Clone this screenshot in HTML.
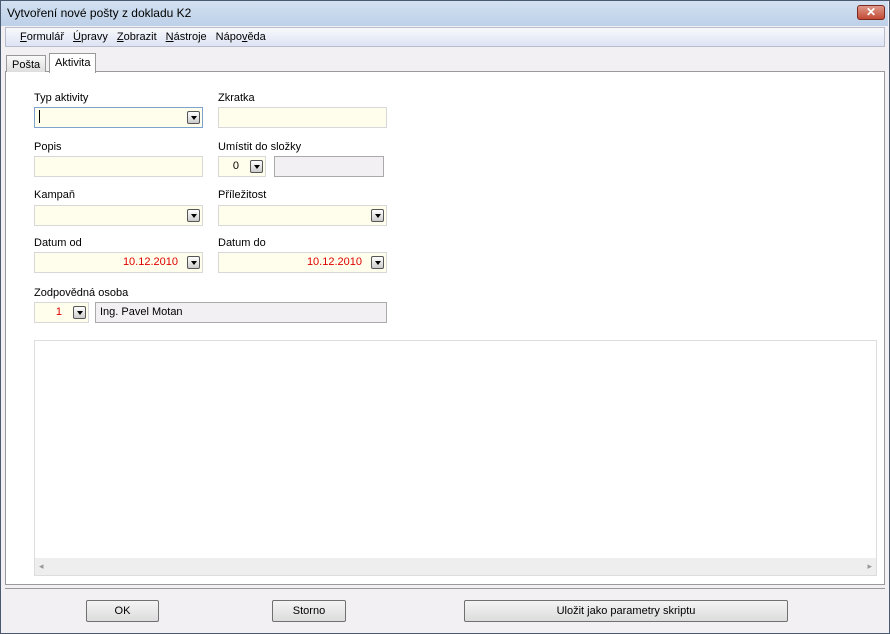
<!DOCTYPE html><html><head><style>
*{box-sizing:border-box}body{margin:0;width:890px;height:634px;overflow:hidden;font-family:"Liberation Sans",sans-serif;font-size:11px;color:#000;position:relative;background:#f2f0f2}
.a{position:absolute}
.win{left:0;top:0;width:890px;height:634px;border:1px solid #4a5a70;background:#f2f0f2}
.title{left:1px;top:1px;width:887px;height:25px;background:linear-gradient(#d3e1f1,#bdd0e8);font-size:12px;padding:5px 6px}
.close{left:857px;top:5px;width:28px;height:15px;background:linear-gradient(#e1998a,#c24a34);border:1px solid #7a2a20;border-radius:3px;color:#fff;font-weight:bold;text-align:center;font-size:12px;line-height:13px}
.menu{left:5px;top:27px;width:880px;height:20px;background:linear-gradient(#f8f9fd,#dde3f3);border:1px solid #b8bccc;padding:3px 0 0 14px}
.menu span{margin-right:9px}
.tab{top:53px;height:19px;padding:3px 5px;border:1px solid #999;border-bottom:none}
.panel{left:5px;top:71px;width:880px;height:514px;background:#fff;border:1px solid #9a9a9a}
.inp{background:#fffeec;border:1px solid #d8d8d8;height:21px}
.dd{width:13px;height:13px;border:1px solid #555;border-radius:2px;background:linear-gradient(#fff,#ccc)}
.dd:after{content:"";position:absolute;left:3px;top:4px;border:3px solid transparent;border-top:4px solid #000}
.red{color:#e00000;text-align:right}
.btn{top:600px;height:22px;border:1px solid #707070;border-radius:2px;background:linear-gradient(#f4f4f4,#dcdcdc);text-align:center;line-height:20px;font-size:11px}
</style></head><body>
<div class="a win"></div>
<div class="a title">Vytvoření nové pošty z dokladu K2</div>
<div class="a close">✕</div>
<div class="a menu"><span><u>F</u>ormulář</span><span><u>Ú</u>pravy</span><span><u>Z</u>obrazit</span><span><u>N</u>ástroje</span><span>Nápo<u>v</u>ěda</span></div>
<div class="a panel"></div>
<div class="a tab" style="left:6px;top:55px;height:17px;background:linear-gradient(#fafafa,#ddd)">Pošta</div>
<div class="a tab" style="left:49px;background:#fff;height:20px">Aktivita</div>
<div class="a" style="left:34px;top:92px">Typ aktivity</div>
<div class="a inp" style="left:34px;top:107px;width:169px;border-color:#7da2ce"></div>
<div class="a" style="left:39px;top:110px;width:1px;height:13px;background:#000"></div>
<div class="a dd" style="left:187px;top:111px"></div>
<div class="a" style="left:218px;top:92px">Zkratka</div>
<div class="a inp" style="left:218px;top:107px;width:169px"></div>
<div class="a" style="left:34px;top:141px">Popis</div>
<div class="a inp" style="left:34px;top:156px;width:169px"></div>
<div class="a" style="left:218px;top:141px">Umístit do složky</div>
<div class="a inp" style="left:218px;top:156px;width:48px;padding:3px 26px 0 0;text-align:right">0</div>
<div class="a dd" style="left:250px;top:160px"></div>
<div class="a" style="left:274px;top:156px;width:110px;height:21px;background:#f3f0f3;border:1px solid #aaa"></div>
<div class="a" style="left:34px;top:189px">Kampaň</div>
<div class="a inp" style="left:34px;top:205px;width:169px"></div>
<div class="a dd" style="left:187px;top:209px"></div>
<div class="a" style="left:218px;top:189px">Příležitost</div>
<div class="a inp" style="left:218px;top:205px;width:169px"></div>
<div class="a dd" style="left:371px;top:209px"></div>
<div class="a" style="left:34px;top:237px">Datum od</div>
<div class="a inp red" style="left:34px;top:252px;width:169px;padding:3px 24px 0 0">10.12.2010</div>
<div class="a dd" style="left:187px;top:256px"></div>
<div class="a" style="left:218px;top:237px">Datum do</div>
<div class="a inp red" style="left:218px;top:252px;width:169px;padding:3px 24px 0 0">10.12.2010</div>
<div class="a dd" style="left:371px;top:256px"></div>
<div class="a" style="left:34px;top:287px">Zodpovědná osoba</div>
<div class="a inp red" style="left:34px;top:302px;width:55px;padding:3px 26px 0 0">1</div>
<div class="a dd" style="left:73px;top:306px"></div>
<div class="a" style="left:95px;top:302px;width:292px;height:21px;background:#f3f0f3;border:1px solid #aaa;padding:3px 4px">Ing. Pavel Motan</div>
<div class="a" style="left:34px;top:340px;width:843px;height:236px;border:1px solid #ddd;background:#fff"></div>
<div class="a" style="left:35px;top:558px;width:841px;height:17px;background:#eeeeee;color:#999;font-size:9px;padding:3px 4px">◂<span style="float:right">▸</span></div>
<div class="a" style="left:5px;top:588px;width:880px;height:1px;background:#999"></div>
<div class="a btn" style="left:86px;width:73px">OK</div>
<div class="a btn" style="left:272px;width:74px">Storno</div>
<div class="a btn" style="left:464px;width:324px">Uložit jako parametry skriptu</div>
</body></html>
